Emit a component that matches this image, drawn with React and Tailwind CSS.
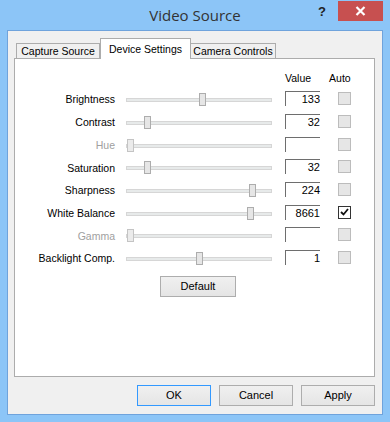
import React from "react";

const rows = [
  { label: "Brightness", thumb: 73, value: "133" },
  { label: "Contrast", thumb: 18, value: "32" },
  { label: "Hue", thumb: 1, value: "", disabled: true },
  { label: "Saturation", thumb: 18, value: "32" },
  { label: "Sharpness", thumb: 123, value: "224" },
  { label: "White Balance", thumb: 121, value: "8661", checked: true },
  { label: "Gamma", thumb: 1, value: "", disabled: true },
  { label: "Backlight Comp.", thumb: 70, value: "1" },
];

function Slider({ thumb, disabled }) {
  return (
    <div className="relative h-[14px] w-[146px] flex items-center">
      <div className="h-[4px] w-full border border-[#d6d6d6] bg-[#e7eaea]" />
      <div
        className={
          "absolute top-0 h-[13px] w-[7px] border " +
          (disabled ? "border-[#c4c4c4] bg-[#ebebeb]" : "border-[#adadad] bg-[#e6e6e6]")
        }
        style={{ left: thumb }}
      />
    </div>
  );
}

function Row({ r }) {
  return (
    <div className="flex items-center h-[22.7px]">
      <div
        className={
          "w-[100px] text-right text-[10.5px] " + (r.disabled ? "text-[#a0a0a0]" : "text-black")
        }
      >
        {r.label}
      </div>
      <div className="ml-[11px]">
        <Slider thumb={r.thumb} disabled={r.disabled} />
      </div>
      <div className="ml-[13px] h-[15px] w-[35px] border-t border-l border-[#6e6e6e] bg-white text-right leading-[14px] -mt-[3px]">
        {r.value}
      </div>
      <div className="ml-[18px] -mt-[3px]">
        {r.checked ? (
          <div className="h-[13px] w-[13px] border border-[#333] bg-white flex items-center justify-center">
            <svg width="9" height="8" viewBox="0 0 9 8">
              <path d="M1 4 L3.5 6.5 L8 1" fill="none" stroke="#111" strokeWidth="1.8" />
            </svg>
          </div>
        ) : (
          <div className="h-[13px] w-[13px] border border-[#bcbcbc] bg-[#e6e6e6]" />
        )}
      </div>
    </div>
  );
}

export default function App() {
  return (
    <div
      className="w-[390px] h-[422px] bg-[#8cc5f7] flex flex-col overflow-hidden text-[11px] text-black"
      style={{ fontFamily: '"Liberation Sans", Arial, sans-serif' }}
    >
      {/* title bar */}
      <div className="h-[30px] grid grid-cols-[1fr_auto_1fr] shrink-0">
        <div />
        <div
          className="text-[15px] text-[#333] pt-[5px] leading-[20px]"
          style={{ fontFamily: '"Open Sans", "Noto Sans", sans-serif' }}
        >
          Video Source
        </div>
        <div className="flex justify-end items-start pr-[7px]">
          <div className="font-bold text-[13px] text-[#222] mt-[4px] mr-[12px] leading-[16px]">?</div>
          <div className="w-[45px] h-[20px] mt-[1px] bg-[#c75050] flex items-center justify-center">
            <svg width="11" height="10" viewBox="0 0 11 10">
              <path d="M1.5 1 L9.5 9 M9.5 1 L1.5 9" stroke="#fff" strokeWidth="2.2" />
            </svg>
          </div>
        </div>
      </div>

      {/* client */}
      <div className="mx-[7px] h-[385px] border border-[#6fa3dc] bg-[#f0f0f0] flex flex-col pl-[6px] pr-[7px] pt-[7px]">
        {/* tabs */}
        <div className="flex items-end h-[20px] pl-[2px] relative z-10">
          <div className="h-[15px] w-[84px] border border-b-0 border-[#acacac] bg-[#f0f0f0] flex items-center justify-center leading-[13px] text-[10.5px]">
            Capture Source
          </div>
          <div className="h-[21px] w-[91px] -mb-px border border-b-0 border-[#acacac] bg-white flex items-start justify-center pt-[4px] leading-[13px] text-[10.5px]">
            Device Settings
          </div>
          <div className="h-[15px] w-[85px] border border-b-0 border-l-0 border-[#acacac] bg-[#f0f0f0] flex items-center justify-center leading-[13px] text-[10.5px]">
            Camera Controls
          </div>
        </div>

        {/* panel */}
        <div className="h-[319px] w-[361px] border border-[#acacac] bg-white flex flex-col">
          <div className="flex h-[30px] items-end pb-[2px] text-[10.5px]">
            <div className="ml-[270px]">Value</div>
            <div className="ml-[18px]">Auto</div>
          </div>
          <div className="flex flex-col">
            {rows.map((r) => (
              <Row key={r.label} r={r} />
            ))}
          </div>
          <div className="ml-[145px] mt-[5px] h-[21px] w-[76px] border border-[#adadad] bg-gradient-to-b from-[#f0f0f0] to-[#e5e5e5] flex items-center justify-center">
            Default
          </div>
        </div>

        {/* buttons */}
        <div className="flex justify-end gap-[8px] mt-[8px]">
          <div className="h-[21px] w-[74px] border border-[#3399ff] bg-gradient-to-b from-[#f0f0f0] to-[#e5e5e5] flex items-center justify-center">
            OK
          </div>
          <div className="h-[21px] w-[74px] border border-[#adadad] bg-gradient-to-b from-[#f0f0f0] to-[#e5e5e5] flex items-center justify-center">
            Cancel
          </div>
          <div className="h-[21px] w-[74px] border border-[#adadad] bg-gradient-to-b from-[#f0f0f0] to-[#e5e5e5] flex items-center justify-center">
            Apply
          </div>
        </div>
      </div>
    </div>
  );
}
